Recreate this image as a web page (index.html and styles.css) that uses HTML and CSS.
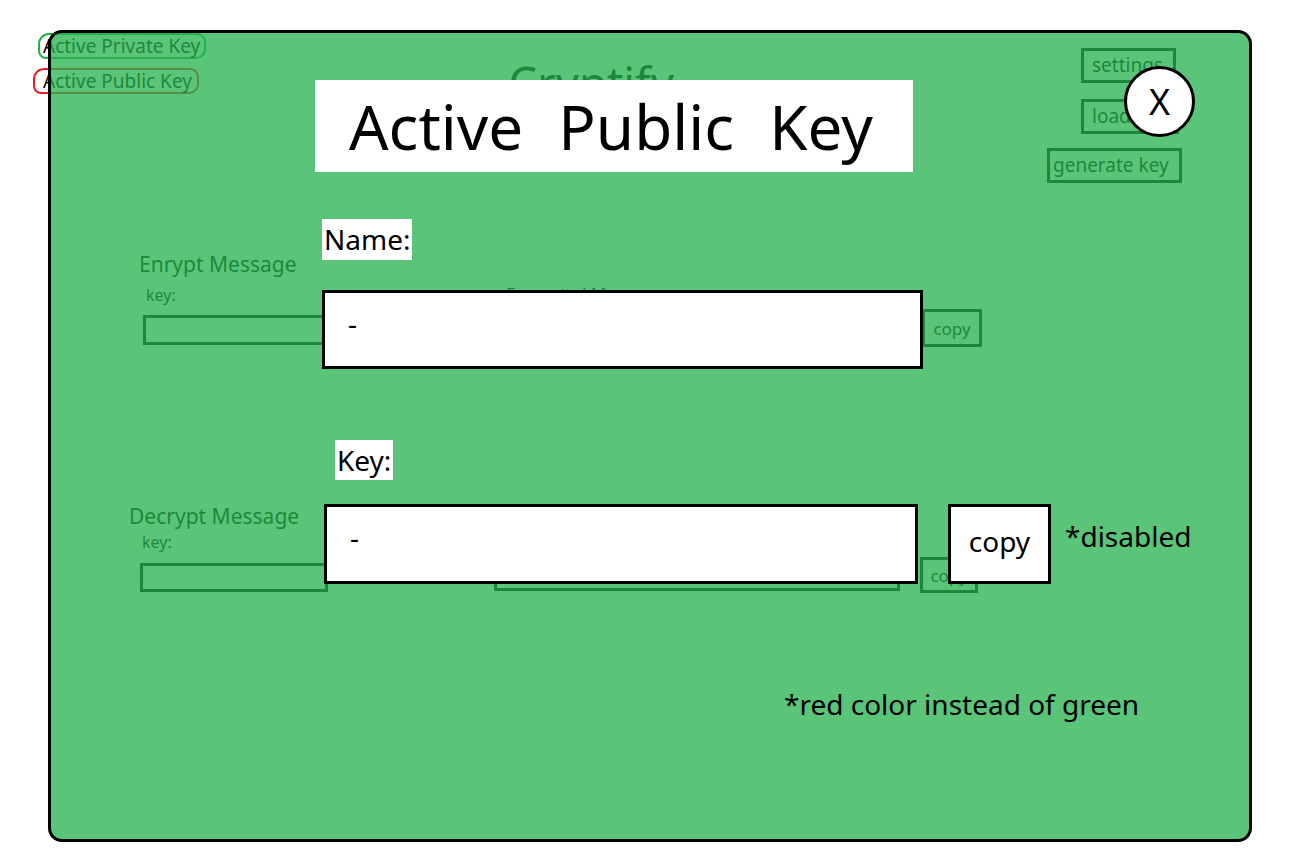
FILE: index.html
```html
<!DOCTYPE html>
<html lang="en">
<head>
<meta charset="utf-8">
<title>Cryptify – Active Public Key</title>
<link rel="stylesheet" href="styles.css">
</head>
<body>
<div class="page">
  <div class="app">
    <header class="app-head">
      <div class="key-list">
        <span class="key-tag key-tag-private">Active Private Key</span>
        <span class="key-tag key-tag-public">Active Public Key</span>
      </div>
      <h1 class="app-title">Cryptify</h1>
      <div class="app-actions">
        <button class="ghost-btn btn-settings">settings</button>
        <button class="ghost-btn btn-load">load key</button>
        <button class="ghost-btn btn-generate">generate key</button>
      </div>
    </header>

    <section class="crypt crypt-enc">
      <div class="crypt-side">
        <h2 class="crypt-heading">Enrypt Message</h2>
        <span class="crypt-keylabel">key:</span>
        <div class="crypt-input"></div>
      </div>
      <div class="crypt-out">
        <span class="crypt-outlabel">Encrypted Message</span>
        <div class="crypt-outbox"></div>
      </div>
      <button class="crypt-copy">copy</button>
    </section>

    <section class="crypt crypt-dec">
      <div class="crypt-side">
        <h2 class="crypt-heading">Decrypt Message</h2>
        <span class="crypt-keylabel">key:</span>
        <div class="crypt-input"></div>
      </div>
      <div class="crypt-out">
        <span class="crypt-outlabel">Decrypted Message</span>
        <div class="crypt-outbox"></div>
      </div>
      <button class="crypt-copy">copy</button>
    </section>
  </div>

  <div class="modal-overlay">
    <div class="modal">
      <div class="modal-head">
        <h1 class="modal-title">Active Public Key</h1>
        <button class="modal-close">X</button>
      </div>

      <span class="field-label field-label-name">Name:</span>
      <div class="field-box field-box-name">-</div>

      <span class="field-label field-label-key">Key:</span>
      <div class="key-row">
        <div class="field-box field-box-key">-</div>
        <button class="copy-btn">copy</button>
        <span class="note note-disabled">*disabled</span>
      </div>

      <span class="note note-red">*red color instead of green</span>
    </div>
  </div>
</div>
</body>
</html>
```

FILE: styles.css
```css
* {
  box-sizing: border-box;
}

body {
  margin: 0;
  background: #ffffff;
  font-family: "Noto Sans", "Open Sans", sans-serif;
  color: #000000;
}

.page {
  position: relative;
  width: 1296px;
  height: 864px;
  overflow: hidden;
  background: #ffffff;
}

/* ---------- underlying app (seen through the overlay) ---------- */

.app-head {
  display: flex;
  align-items: flex-start;
}

.key-list {
  display: flex;
  flex-direction: column;
  align-items: flex-start;
  gap: 9px;
  margin: 33px 0 0 33px;
}

.key-tag {
  font-size: 19px;
  line-height: 22px;
  border: 2px solid;
  border-radius: 11px 9px 10px 8px;
  white-space: nowrap;
}

.key-tag-private {
  border-color: #22b14c;
  margin-left: 5px;
  padding: 0 4px 0 3px;
}

.key-tag-public {
  border-color: #ed1c24;
  padding: 0 5px 0 8px;
}

.app-title {
  margin: 55px 0 0 302px;
  font-size: 45.5px;
  line-height: 54px;
  font-weight: 400;
}

.app-actions {
  margin: 48px 114px 0 auto;
  display: flex;
  flex-direction: column;
  align-items: flex-start;
}

.ghost-btn {
  height: 35px;
  border: 3px solid #000;
  background: transparent;
  font-family: "Noto Sans", sans-serif;
  font-size: 19px;
  line-height: 29px;
  color: #000;
  text-align: left;
  padding: 0;
  white-space: nowrap;
}

.btn-settings {
  width: 95px;
  padding-left: 8px;
  margin-left: 34px;
}

.btn-load {
  width: 98px;
  padding-left: 8px;
  margin-left: 34px;
  margin-top: 16px;
}

.btn-generate {
  width: 135px;
  padding-left: 3px;
  margin-top: 14px;
}

.crypt {
  display: flex;
  align-items: flex-start;
}

.crypt-side {
  display: flex;
  flex-direction: column;
  align-items: flex-start;
  width: 192px;
}

.crypt-heading {
  margin: 0;
  font-size: 21px;
  line-height: 25px;
  font-weight: 400;
  white-space: nowrap;
}

.crypt-keylabel {
  font-size: 16px;
  line-height: 19px;
}

.crypt-input {
  width: 188px;
  border: 3px solid #000;
}

.crypt-out {
  display: flex;
  flex-direction: column;
  align-items: flex-start;
  width: 406px;
}

.crypt-outlabel {
  margin: 32px 0 0 12px;
  font-size: 17px;
  line-height: 20px;
  white-space: nowrap;
}

.crypt-outbox {
  width: 406px;
  height: 30px;
  border: 3px solid #000;
}

.crypt-copy {
  border: 3px solid #000;
  background: transparent;
  font-family: "Noto Sans", sans-serif;
  font-size: 17px;
  color: #000;
  padding: 0;
}

/* encrypt block */
.crypt-enc {
  margin-top: 69px;
  padding-left: 139px;
}

.crypt-enc .crypt-keylabel {
  margin: 9px 0 0 7px;
}

.crypt-enc .crypt-input {
  margin: 10px 0 0 4px;
  height: 30px;
}

.crypt-enc .crypt-out {
  margin-left: 163px;
}

.crypt-enc .crypt-outbox {
  margin-top: 11px;
}

.crypt-enc .crypt-copy {
  width: 60px;
  height: 38px;
  margin: 57px 0 0 22px;
}

/* decrypt block */
.crypt-dec {
  margin-top: 157px;
  padding-left: 129px;
}

.crypt-dec .crypt-keylabel {
  margin: 4px 0 0 13px;
}

.crypt-dec .crypt-input {
  margin: 11px 0 0 11px;
  height: 29px;
}

.crypt-dec .crypt-out {
  margin-left: 173px;
}

.crypt-dec .crypt-outbox {
  margin-top: 5px;
}

.crypt-dec .crypt-copy {
  width: 58px;
  height: 36px;
  margin: 53px 0 0 20px;
}

/* ---------- modal overlay ---------- */

.modal-overlay {
  position: absolute;
  left: 48px;
  top: 30px;
  width: 1204px;
  height: 812px;
  border: 3px solid #000;
  border-radius: 14px;
  background: rgba(38, 177, 78, 0.76);
}

.modal {
  display: flex;
  flex-direction: column;
  align-items: flex-start;
  padding: 33px 0 0 264px;
}

.modal-head {
  display: flex;
  align-items: flex-start;
}

.modal-title {
  margin: 14px 0 0;
  width: 598px;
  height: 92px;
  padding-left: 34px;
  background: #fff;
  font-size: 62px;
  line-height: 92px;
  font-weight: 400;
  word-spacing: 19px;
  white-space: nowrap;
}

.modal-close {
  margin-left: 211px;
  width: 71px;
  height: 71px;
  border: 3px solid #000;
  border-radius: 50%;
  background: #fff;
  font-family: "Noto Sans", sans-serif;
  font-size: 36px;
  line-height: 1;
  color: #000;
  padding: 0;
  display: flex;
  align-items: center;
  justify-content: center;
}

.field-label {
  background: #fff;
  font-size: 28px;
  padding: 0 2px;
}

.field-label-name {
  margin: 47px 0 0 7px;
  line-height: 41px;
}

.field-label-key {
  margin: 71px 0 0 20px;
  line-height: 40px;
}

.field-box {
  border: 3px solid #000;
  background: #fff;
  padding: 11px 0 0 23px;
  font-size: 28px;
  line-height: 38px;
}

.field-box-name {
  width: 601px;
  height: 79px;
  margin: 30px 0 0 7px;
}

.key-row {
  display: flex;
  align-items: flex-start;
  margin-top: 24px;
}

.field-box-key {
  width: 594px;
  height: 80px;
  margin-left: 9px;
}

.copy-btn {
  margin-left: 30px;
  width: 103px;
  height: 80px;
  border: 3px solid #000;
  background: #fff;
  font-family: "Noto Sans", sans-serif;
  font-size: 28px;
  line-height: 38px;
  color: #000;
  padding: 0 0 6px;
}

.note {
  font-size: 28px;
  line-height: 38px;
  white-space: nowrap;
}

.note-disabled {
  margin: 13px 0 0 14px;
}

.note-red {
  margin: 101px 0 0 469px;
}
```
